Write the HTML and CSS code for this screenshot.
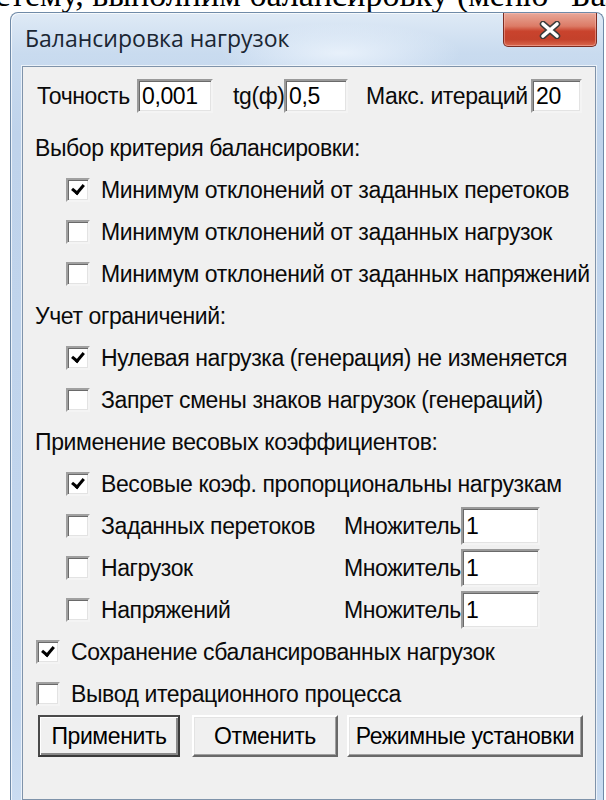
FILE: index.html
```html
<!DOCTYPE html>
<html lang="ru">
<head>
<meta charset="utf-8">
<title>Балансировка нагрузок</title>
<link rel="stylesheet" href="styles.css">
</head>
<body>
<div class="intro"><p>стему, выполним балансировку (меню "Балансировка"</p></div>

<div class="window">
  <div class="titlebar">
    <span class="title">Балансировка нагрузок</span>
    <span class="close">
      <svg viewBox="0 0 24 18" width="24" height="18">
        <path d="M5 3 L19 15 M19 3 L5 15" stroke="#3b3b3b" stroke-width="6.5" stroke-linecap="round" fill="none"/>
        <path d="M5 3 L19 15 M19 3 L5 15" stroke="#ffffff" stroke-width="3.6" stroke-linecap="round" fill="none"/>
      </svg>
    </span>
  </div>

  <div class="client">
    <div class="params">
      <span class="lbl l-acc">Точность</span><span class="edit w-acc">0,001</span>
      <span class="lbl l-tg">tg(ф)</span><span class="edit w-tg">0,5</span>
      <span class="lbl l-it">Макс. итераций</span><span class="edit w-it">20</span>
    </div>

    <div class="row section">Выбор критерия балансировки:</div>
    <div class="row sub"><span class="cb on"></span><span>Минимум отклонений от заданных перетоков</span></div>
    <div class="row sub"><span class="cb"></span><span>Минимум отклонений от заданных нагрузок</span></div>
    <div class="row sub"><span class="cb"></span><span>Минимум отклонений от заданных напряжений</span></div>

    <div class="row section">Учет ограничений:</div>
    <div class="row sub"><span class="cb on"></span><span>Нулевая нагрузка (генерация) не изменяется</span></div>
    <div class="row sub"><span class="cb"></span><span>Запрет смены знаков нагрузок (генераций)</span></div>

    <div class="row section">Применение весовых коэффициентов:</div>
    <div class="row sub"><span class="cb on"></span><span>Весовые коэф. пропорциональны нагрузкам</span></div>
    <div class="row sub"><span class="cb"></span><span class="kind">Заданных перетоков</span><span class="mul">Множитель</span><span class="edit w-mul">1</span></div>
    <div class="row sub"><span class="cb"></span><span class="kind">Нагрузок</span><span class="mul">Множитель</span><span class="edit w-mul">1</span></div>
    <div class="row sub"><span class="cb"></span><span class="kind">Напряжений</span><span class="mul">Множитель</span><span class="edit w-mul">1</span></div>

    <div class="row top"><span class="cb on"></span><span>Сохранение сбалансированных нагрузок</span></div>
    <div class="row top"><span class="cb"></span><span>Вывод итерационного процесса</span></div>

    <div class="buttons">
      <span class="btn default w-apply">Применить</span>
      <span class="btn w-cancel">Отменить</span>
      <span class="btn w-mode">Режимные установки</span>
    </div>
  </div>
</div>
</body>
</html>
```

FILE: styles.css
```css
html, body {
  margin: 0;
  background: #ffffff;
}

body {
  font-family: "Liberation Sans", Arial, sans-serif;
  color: #111;
}

/* line of the article text above the dialog, only its lower edge shows */
.intro {
  height: 12px;
  overflow: hidden;
  white-space: nowrap;
}
.intro p {
  margin: -24px 0 0 -5px;
  font-family: "Liberation Serif", "Times New Roman", serif;
  font-size: 34px;
  line-height: 38px;
  color: #000;
}

/* Aero-style window frame */
.window {
  margin: 0 2px 0 10px;
  height: 787px;
  border: 1px solid #6f8aa8;
  border-bottom: none;
  border-radius: 8px 8px 0 0;
  padding: 0 7px 0 11px;
  display: flex;
  flex-direction: column;
  background:
    radial-gradient(ellipse 120px 30px at 330px 40px, rgba(235, 243, 252, 0.9), rgba(235, 243, 252, 0) 100%),
    linear-gradient(180deg, #dfeaf6 0px, #c9dbef 40px, #bfd3eb 120px, #c2d6ee 700px, #cadcf1 100%);
  box-shadow: inset 1px 1px 0 rgba(255, 255, 255, 0.7);
}

.titlebar {
  height: 53px;
  display: flex;
  align-items: flex-start;
}
.title {
  flex: 1;
  margin: 10px 0 0 3px;
  font-family: "Open Sans", "Noto Sans", sans-serif;
  font-size: 23px;
  line-height: 30px;
  color: #1b2633;
}
.close {
  width: 92px;
  height: 33px;
  margin: 0 -1px 0 0;
  border: 1px solid #7b2c22;
  border-top: none;
  border-radius: 0 0 5px 5px;
  display: flex;
  align-items: center;
  justify-content: center;
  background: linear-gradient(180deg, #e8a899 0%, #dc7b66 40%, #c9432d 55%, #c4412b 80%, #d9684e 100%);
  box-shadow: inset 0 0 0 1px rgba(255, 200, 190, 0.45);
}

/* dialog client area */
.client {
  flex: 1;
  background: #f0f0f0;
  border: 1px solid #7f93aa;
  box-shadow: 0 0 0 1px rgba(255, 255, 255, 0.65);
  padding: 8px 0 0 12px;
  font-size: 23px;
  letter-spacing: -0.4px;
  color: #0a0a0a;
}

.params {
  height: 42px;
  display: flex;
  align-items: center;
  padding-left: 2px;
  margin-bottom: 10px;
}
.lbl { flex: none; }
.l-acc { width: 100px; }
.l-tg { width: 51px; margin-left: 20px; }
.l-it { width: 165px; margin-left: 18px; }

/* sunken edit field */
.edit {
  box-sizing: border-box;
  height: 34px;
  background: #fff;
  border-style: solid;
  border-width: 2px;
  border-color: #9a9a9a #f4f4f4 #f4f4f4 #9a9a9a;
  box-shadow: inset 1px 1px 0 #6a6a6a, inset -1px -1px 0 #e3e3e3;
  padding: 0 3px;
  line-height: 30px;
  color: #000;
}
.w-acc { width: 76px; }
.w-tg { width: 64px; }
.w-it { width: 51px; }
.w-mul { width: 79px; height: 38px; line-height: 34px; }

.row {
  height: 42px;
  display: flex;
  align-items: center;
  white-space: nowrap;
}
.section { padding-left: 0; }
.sub { padding-left: 31px; }
.top { padding-left: 1px; }

/* sunken check box */
.cb {
  box-sizing: border-box;
  width: 24px;
  height: 24px;
  margin-right: 11px;
  background: #fff;
  border-style: solid;
  border-width: 2px;
  border-color: #a0a0a0 #f4f4f4 #f4f4f4 #a0a0a0;
  box-shadow: inset 1px 1px 0 #6a6a6a, inset -1px -1px 0 #e3e3e3;
  flex: none;
  position: relative;
}
.cb.on::after {
  content: "";
  position: absolute;
  left: 4px;
  top: 2px;
  width: 5px;
  height: 9px;
  border: solid #000;
  border-width: 0 3px 3px 0;
  transform: translate(2px, 0) rotate(40deg);
}

.kind { width: 243px; }
.mul { width: 117px; flex: none; }

.buttons {
  padding-left: 3px;
  display: flex;
}
.btn {
  box-sizing: border-box;
  height: 42px;
  display: flex;
  align-items: center;
  justify-content: center;
  background: #f0f0f0;
  border-style: solid;
  border-width: 2px;
  border-color: #ffffff #696969 #696969 #ffffff;
  box-shadow: inset -1px -1px 0 #a0a0a0, inset 1px 1px 0 #e3e3e3;
  color: #000;
}
.btn.default {
  border-color: #4a4a4a #3a3a3a #3a3a3a #4a4a4a;
  box-shadow: inset 1px 1px 0 #ffffff, inset -2px -2px 0 #8a8a8a;
}
.w-apply { width: 142px; }
.w-cancel { width: 146px; margin-left: 12px; }
.w-mode { width: 236px; margin-left: 9px; }
```
